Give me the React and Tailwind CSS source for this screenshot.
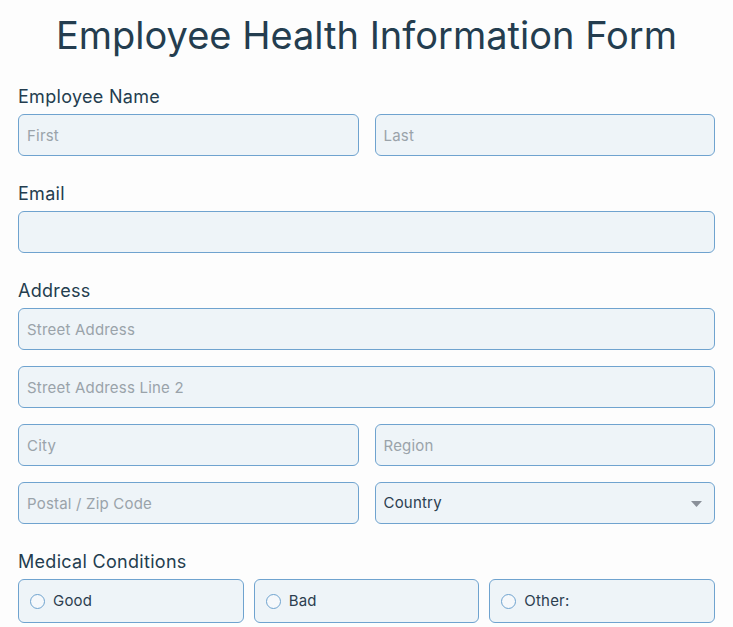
const font = { fontFamily: 'Inter, "Noto Sans", sans-serif' }

const inputClass =
  'h-[42px] w-full rounded-md border border-[#6fa3cf] bg-[#eef4f8] px-2 text-[15px] tracking-[0.2px] text-[#2c3e50] placeholder:text-[#9aa3aa] outline-none'

function Label({ children }) {
  return <label className="mb-[5px] block text-[18px] leading-6 tracking-[0.3px] text-[#243d4f]">{children}</label>
}

function Radio({ label }) {
  return (
    <label className="flex h-[44px] items-center gap-[8px] rounded-md border border-[#6fa3cf] bg-[#eef4f8] px-[11px] text-[15px] tracking-[0.2px] text-[#2c3e50]">
      <span className="h-[15px] w-[15px] rounded-full border border-[#6fa3cf] bg-white/40" />
      {label}
    </label>
  )
}

export default function App() {
  return (
    <div className="min-h-screen bg-[#fdfdfd] px-[18px]" style={font}>
      <h1 className="pt-[13px] text-center text-[38px] leading-[44px] text-[#243d4f]">
        Employee Health Information Form
      </h1>

      <div className="mt-[28px]">
        <Label>Employee Name</Label>
        <div className="grid grid-cols-2 gap-4">
          <input className={inputClass} placeholder="First" />
          <input className={inputClass} placeholder="Last" />
        </div>
      </div>

      <div className="mt-[26px]">
        <Label>Email</Label>
        <input className={inputClass} />
      </div>

      <div className="mt-[26px]">
        <Label>Address</Label>
        <div className="flex flex-col gap-4">
          <input className={inputClass} placeholder="Street Address" />
          <input className={inputClass} placeholder="Street Address Line 2" />
          <div className="grid grid-cols-2 gap-4">
            <input className={inputClass} placeholder="City" />
            <input className={inputClass} placeholder="Region" />
          </div>
          <div className="grid grid-cols-2 gap-4">
            <input className={inputClass} placeholder="Postal / Zip Code" />
            <div className="relative">
              <select className={inputClass + ' appearance-none'} defaultValue="">
                <option value="">Country</option>
              </select>
              {/* dropdown caret */}
              <svg className="pointer-events-none absolute right-[13px] top-[19px]" width="11" height="6" viewBox="0 0 11 6">
                <path d="M0 0h11L5.5 6z" fill="#8a9099" />
              </svg>
            </div>
          </div>
        </div>
      </div>

      <div className="mt-[26px]">
        <Label>Medical Conditions</Label>
        <div className="grid grid-cols-3 gap-[10px]">
          <Radio label="Good" />
          <Radio label="Bad" />
          <Radio label="Other:" />
        </div>
      </div>
    </div>
  )
}
